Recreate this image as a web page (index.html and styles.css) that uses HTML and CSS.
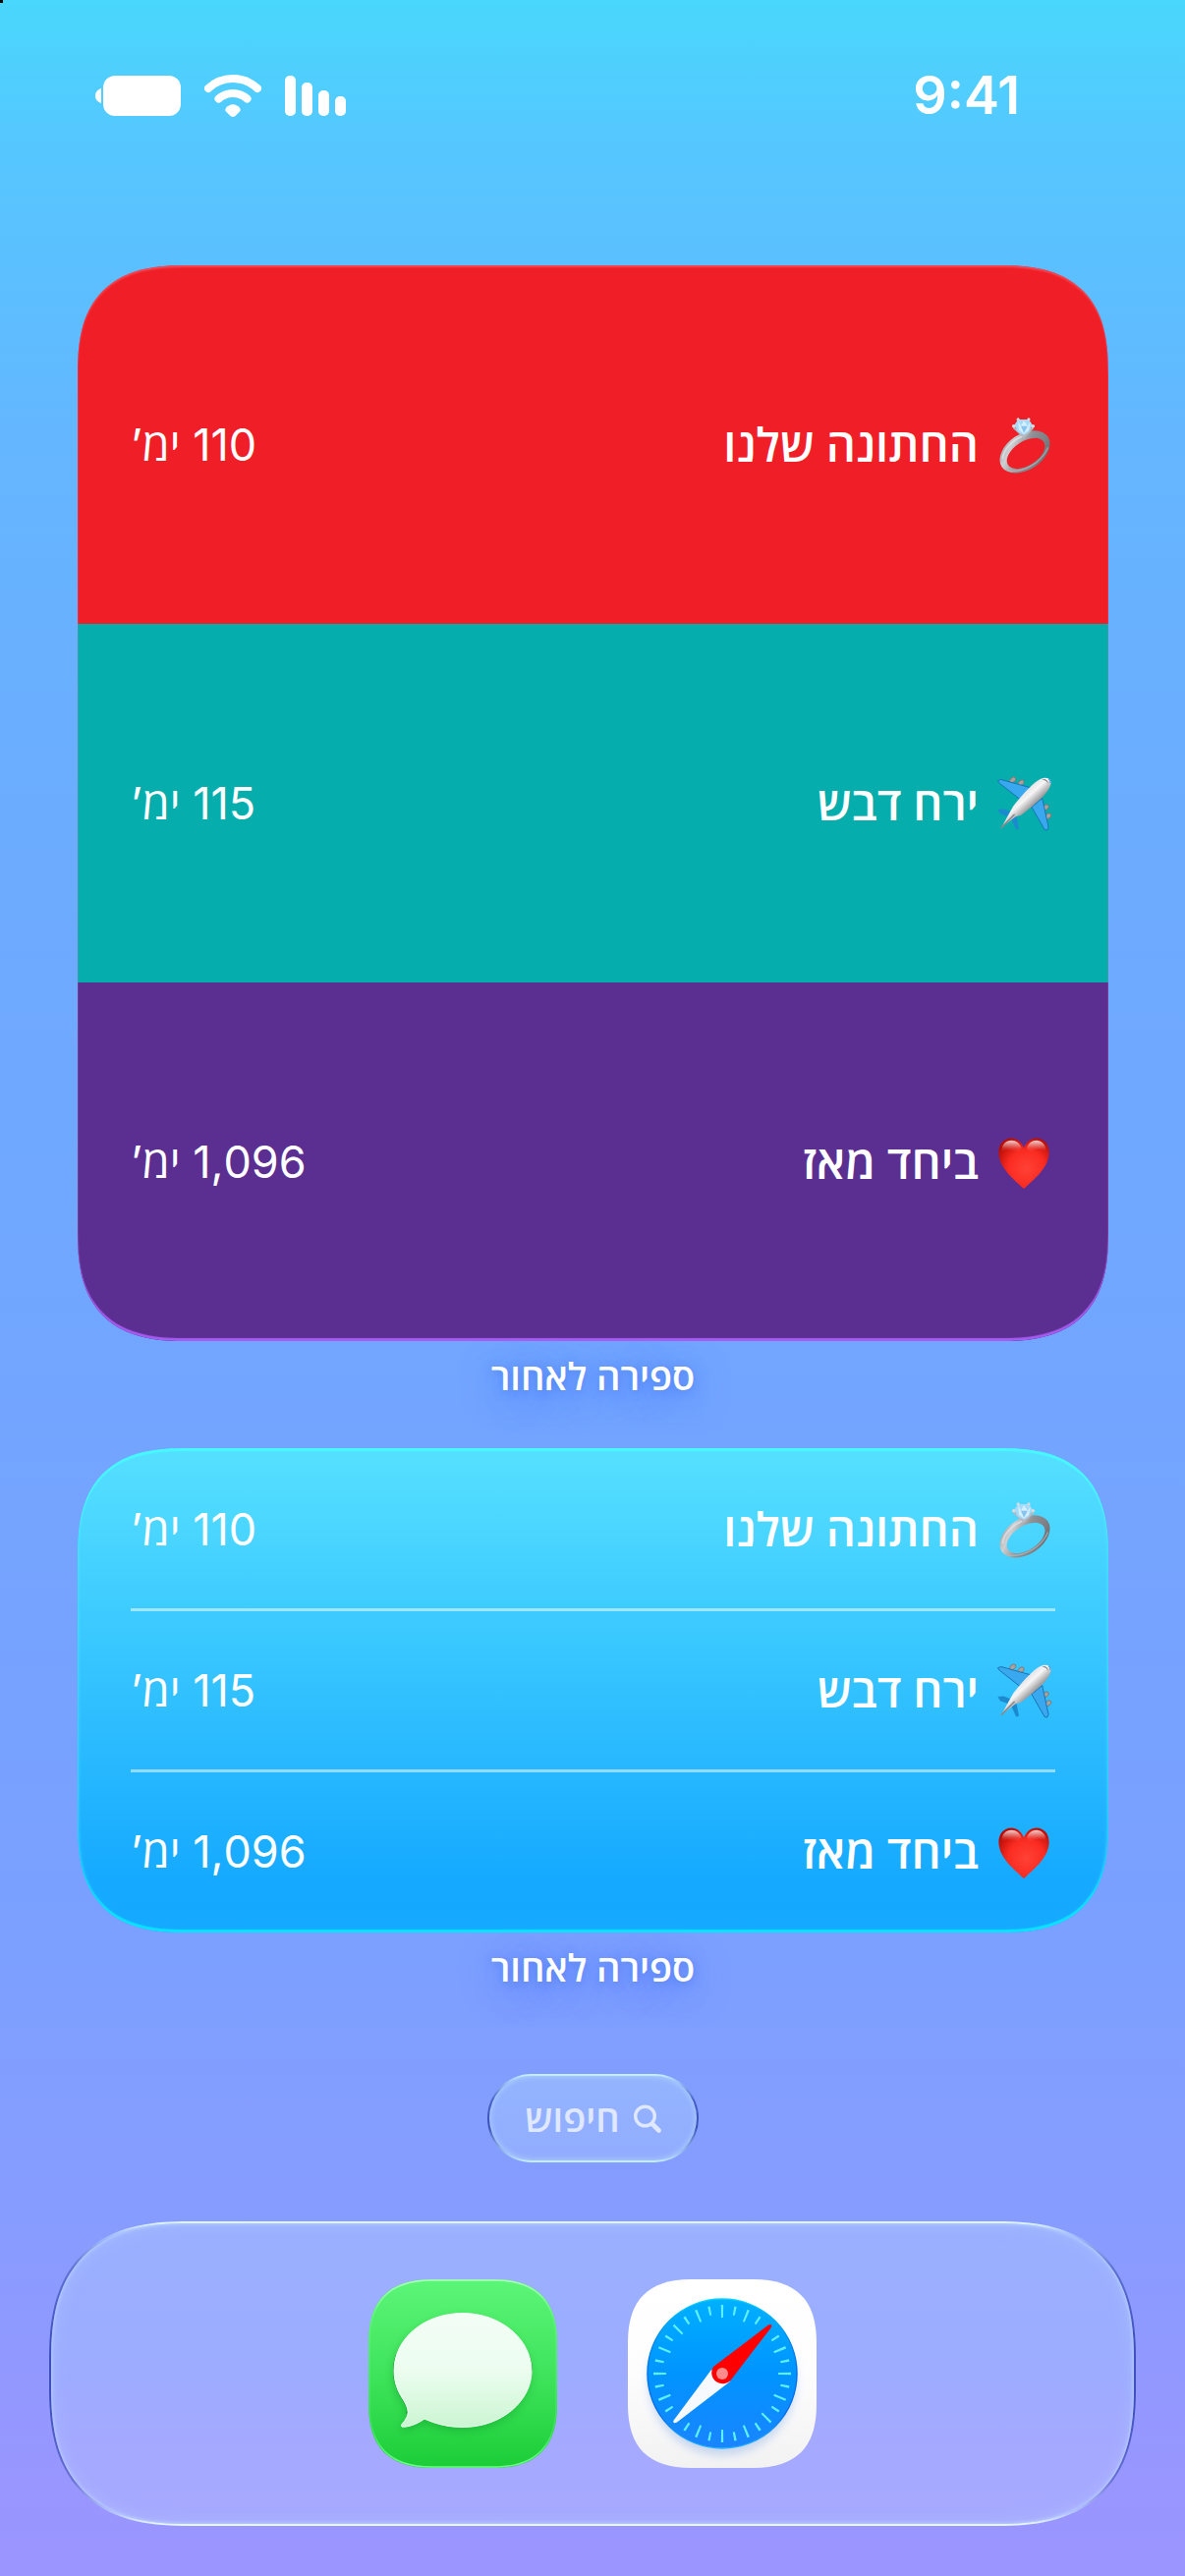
FILE: index.html
```html
<!DOCTYPE html>
<html lang="he" dir="rtl">
<head>
<meta charset="utf-8">
<meta name="viewport" content="width=device-width, initial-scale=1">
<title>ספירה לאחור</title>
<link rel="stylesheet" href="styles.css">
</head>
<body>
<svg class="defs" aria-hidden="true">
  <defs>
    <linearGradient id="metal" x1="0" y1="0" x2="1" y2="1">
      <stop offset="0" stop-color="#7f8186"/><stop offset=".25" stop-color="#cfd0d3"/><stop offset=".5" stop-color="#8e9095"/><stop offset=".75" stop-color="#7c7e83"/><stop offset="1" stop-color="#5b5e63"/>
    </linearGradient>
    <linearGradient id="body" gradientUnits="userSpaceOnUse" x1="30" y1="20" x2="42" y2="33">
      <stop offset="0" stop-color="#e4e4e6"/><stop offset=".35" stop-color="#f6f6f7"/><stop offset="1" stop-color="#8c8a8c"/>
    </linearGradient>
    <radialGradient id="heart" cx=".55" cy=".6" r=".65">
      <stop offset="0" stop-color="#ff4136"/><stop offset=".55" stop-color="#fb2c22"/><stop offset="1" stop-color="#b80c05"/>
    </radialGradient>
    <linearGradient id="shine" x1="0" y1="0" x2="0" y2="1">
      <stop offset="0" stop-color="#fff" stop-opacity=".8"/><stop offset=".7" stop-color="#fff" stop-opacity=".1"/><stop offset="1" stop-color="#fff" stop-opacity="0"/>
    </linearGradient>
    <symbol id="ring" viewBox="0 0 62 62">
      <path fill="url(#metal)" fill-rule="evenodd" transform="rotate(-33 31 38.500)" d="M2.500 38.500a28.500 18.500 0 1 0 57 0a28.500 18.500 0 1 0-57 0zM9 40.500a22 12.500 0 1 0 44 0a22 12.500 0 1 0-44 0z"/>
      <path d="M8 45C9 36 18 26 31 21.500" fill="none" stroke="#e6e7e9" stroke-width="1.800" stroke-linecap="round" opacity=".7"/>
      <path d="M14 58C30 60 48 50 55 34" fill="none" stroke="#b9babd" stroke-width="1.300" opacity=".7"/>
      <path d="M20 14l9 8M39 14l-8 8M25 18l5 5 5-5" fill="none" stroke="#b5b9bf" stroke-width="2.200" stroke-linecap="round"/>
      <path d="M20 11l4-6h11l4 6-4 7-5 3-6-3z" fill="#a6dafa"/>
      <path d="M24 6l3 6 3-6 4 6 3-5-2 9-5 4-5-4z" fill="#d4efff"/>
      <path d="M27 12l3 7 4-7z" fill="#86c3ee"/>
      <g fill="#d8d9dc"><circle cx="24" cy="5" r="1.600"/><circle cx="35" cy="5" r="1.600"/><circle cx="19.500" cy="12" r="1.800"/><circle cx="39.500" cy="12" r="1.800"/></g>
    </symbol>
    <symbol id="plane" viewBox="0 0 62 62">
      <g fill="#a9a29f" stroke="#77706d" stroke-width=".8">
        <ellipse cx="18.500" cy="7" rx="3.600" ry="2.400" transform="rotate(-40 18.500 7)"/><ellipse cx="27" cy="10" rx="3.600" ry="2.400" transform="rotate(-40 27 10)"/>
        <ellipse cx="52.500" cy="35.500" rx="3.600" ry="2.400" transform="rotate(-40 52.500 35.500)"/><ellipse cx="55" cy="44.500" rx="3.600" ry="2.400" transform="rotate(-40 55 44.500)"/>
      </g>
      <path class="tail" d="M3 37.500l6-.5 10 4-3.500 4.500L5.500 42zM22 43l3 14.500-3 1L17 47z"/>
      <path class="wing" d="M3 8l3-1.500L37 15 26 27 5 10.500zM49 26l6.500 30-1.500 3-2.500-.5L38 35z"/>
      <path fill="url(#body)" d="M7 56L19 34C26 25 38 11 46 6.500c5-2.500 10-2 11.500 1 1.500 3-.5 7-3 11C49 26 35 37.500 27 43.500l-5.500 1.500z"/>
      <path d="M49 7c2.500-1.500 6 0 6 4l-1.500-2.500C52 7 51 7 49 7z" fill="#5b5c62"/>
      <path d="M55.500 6c1.500.5 2.300 2 1.500 4" fill="none" stroke="#4aa5e8" stroke-width="1.200"/>
      <path d="M7 56l13-13" stroke="#8c8789" stroke-width="1.600" stroke-linecap="round"/>
    </symbol>
    <symbol id="love" viewBox="0 0 62 62">
      <path fill="url(#heart)" d="M30 59C21 50 4 38 4 21 4 12 10 6.500 17 6.500c6 0 10.500 4 13 10 2.500-6 7-10 13-10C50 6.500 56 12 56 21 56 38 39 50 30 59z"/>
      <path fill="url(#shine)" d="M7 20C7 13 12 9 17 9s9 3 10.500 8L24 21c-6-3-12-3-17-1zM33 17c1.500-5 5.500-8 10-8s10 4 10 11c-5-3-11-3-16 1z"/>
    </symbol>
  </defs>
</svg>

<header class="status">
  <time class="clock">9:41</time>
  <div class="indicators">
    <svg width="62" height="42" viewBox="0 0 62 42" role="img" aria-label="קליטה">
      <g fill="#fff"><rect y="1" width="11" height="41" rx="5"/><rect x="17" y="8" width="11" height="34" rx="5"/><rect x="34" y="16" width="11" height="26" rx="5"/><rect x="51" y="22" width="11" height="20" rx="5"/></g>
    </svg>
    <svg width="58" height="43" viewBox="0 0 58 43" role="img" aria-label="רשת אלחוטית">
      <path d="M4 14C18 .8 40 .8 54 14M14.500 24.500C22.500 17 35.500 17 43.500 24.500" fill="none" stroke="#fff" stroke-width="8" stroke-linecap="round"/>
      <path d="M22 34c4-5 10-5 14 0 1.500 2 .5 3-.5 4l-4 4c-1.500 1.300-3.500 1.300-5 0l-4-4c-1-1-2-2-.5-4z" fill="#fff"/>
    </svg>
    <svg width="87" height="41" viewBox="0 0 87 41" role="img" aria-label="סוללה">
      <rect x="8" width="79" height="41" rx="12" fill="#fff"/><path d="M6 13C-2 15-2 26 6 28z" fill="#fff"/>
    </svg>
  </div>
</header>

<main class="home">
  <section class="tile" aria-labelledby="name-large">
    <ul class="widget widget-blocks">
      <li class="event event-red"><svg class="emoji" role="img" aria-label="טבעת"><use href="#ring"/></svg><span class="title">החתונה שלנו</span><span class="days">110 ימ’</span></li>
      <li class="event event-teal"><svg class="emoji" role="img" aria-label="מטוס"><use href="#plane"/></svg><span class="title">ירח דבש</span><span class="days">115 ימ’</span></li>
      <li class="event event-purple"><svg class="emoji" role="img" aria-label="לב"><use href="#love"/></svg><span class="title">ביחד מאז</span><span class="days">1,096 ימ’</span></li>
    </ul>
    <h2 class="name" id="name-large">ספירה לאחור</h2>
  </section>

  <section class="tile" aria-labelledby="name-medium">
    <ul class="widget widget-list">
      <li class="event"><svg class="emoji" role="img" aria-label="טבעת"><use href="#ring"/></svg><span class="title">החתונה שלנו</span><span class="days">110 ימ’</span></li>
      <li class="event"><svg class="emoji" role="img" aria-label="מטוס"><use href="#plane"/></svg><span class="title">ירח דבש</span><span class="days">115 ימ’</span></li>
      <li class="event"><svg class="emoji" role="img" aria-label="לב"><use href="#love"/></svg><span class="title">ביחד מאז</span><span class="days">1,096 ימ’</span></li>
    </ul>
    <h2 class="name" id="name-medium">ספירה לאחור</h2>
  </section>

  <button class="search glass" type="button">
    <svg width="28" height="29" viewBox="0 0 28 29" aria-hidden="true"><circle cx="11.500" cy="12" r="9.800" fill="none" stroke="currentColor" stroke-width="3.400"/><path d="M19 20l6.500 6.500" stroke="currentColor" stroke-width="4.600" stroke-linecap="round"/></svg>
    חיפוש
  </button>
</main>

<nav class="dock glass" aria-label="יישומים">
  <a class="app" href="#safari" aria-label="ספארי">
    <svg viewBox="0 0 192 192" aria-hidden="true">
      <defs>
        <linearGradient id="paper" x1="0" y1="0" x2="0" y2="1"><stop offset="0" stop-color="#fff"/><stop offset=".5" stop-color="#fdfdfe"/><stop offset="1" stop-color="#f2f2f3"/></linearGradient>
        <linearGradient id="dial" x1="0" y1="0" x2="0" y2="1"><stop offset="0" stop-color="#00b0ff"/><stop offset=".5" stop-color="#0094ff"/><stop offset="1" stop-color="#1a84ff"/></linearGradient>
        <linearGradient id="rim" x1="0" y1="0" x2="0" y2="1"><stop offset="0" stop-color="#00d2ff"/><stop offset=".3" stop-color="#0080e8"/><stop offset=".75" stop-color="#0068e8"/><stop offset="1" stop-color="#20b4ff"/></linearGradient>
        <filter id="soft" x="-20%" y="-20%" width="140%" height="150%"><feGaussianBlur stdDeviation="5"/></filter>
      </defs>
      <path fill="url(#paper)" d="M64 0H128C171 0 192 21 192 64V128C192 171 171 192 128 192H64C21 192 0 171 0 128V64C0 21 21 0 64 0z"/>
      <circle cx="96" cy="104" r="75" fill="#6a9ae0" opacity=".35" filter="url(#soft)"/>
      <circle cx="96" cy="96" r="76" fill="url(#dial)" stroke="url(#rim)" stroke-width="1.500"/>
      <g fill="none" stroke="#5cf0ff">
        <circle cx="96" cy="96" r="63.500" stroke-width="13" pathLength="360" transform="rotate(-1 96 96)" stroke-dasharray="2 20.500 2 20.500 2 20.500 2 20.500 2 20.500 2 43 2 20.500"/>
        <circle cx="96" cy="96" r="65" stroke-width="9" pathLength="360" transform="rotate(10.250 96 96)" stroke-dasharray="2 20.500"/>
      </g>
      <path d="M85 92L47 143c-2 3 0 4 3 2.500L104 104z" fill="#f6faff"/>
      <path d="M87 89L143 46.500c3-1.500 4 0 2.500 3L106 101A11 11 0 1 1 87 89z" fill="#f00"/>
      <circle cx="96" cy="96" r="6" fill="#ff8b8b"/>
    </svg>
  </a>
  <a class="app" href="#messages" aria-label="הודעות">
    <svg viewBox="0 0 192 192" aria-hidden="true">
      <defs>
        <linearGradient id="green" x1="0" y1="0" x2="0" y2="1"><stop offset="0" stop-color="#5cf578"/><stop offset=".5" stop-color="#3fe45c"/><stop offset="1" stop-color="#1ccd37"/></linearGradient>
        <linearGradient id="edge" x1="0" y1="0" x2="0" y2="1"><stop offset="0" stop-color="#b0ffc0"/><stop offset=".2" stop-color="#5cf578"/><stop offset=".8" stop-color="#3ce058"/><stop offset="1" stop-color="#6cff88"/></linearGradient>
        <linearGradient id="bubble" x1="0" y1="0" x2="0" y2="1"><stop offset="0" stop-color="#f3fdf5"/><stop offset=".5" stop-color="#ecfdf0"/><stop offset="1" stop-color="#cbf5d2"/></linearGradient>
      </defs>
      <path fill="url(#green)" d="M64 0H128C171 0 192 21 192 64V128C192 171 171 192 128 192H64C21 192 0 171 0 128V64C0 21 21 0 64 0z"/>
      <path fill="none" stroke="url(#edge)" stroke-width="1.500" d="M64 1H128C170 1 191 22 191 64V128C191 170 170 191 128 191H64C22 191 1 170 1 128V64C1 22 22 1 64 1z"/>
      <path transform="translate(-1 4)" opacity=".3" filter="url(#soft)" fill="#067a1c" d="M96 34.500C57 34.500 26 60 26 93c0 11 3 20 9 29 5 8 7 14 3 20-2 4-6 6-4 8 4 1 15-2 23-8 11 5 24 8.500 39 8.500 39 0 70-26 70-57.500S135 34.500 96 34.500z"/>
      <path fill="#0a9c22" transform="translate(-1 0)" d="M96 38C57 38 26 62 26 93c0 11 3 20 9 29 4 7 6 10 4 15L168 93C168 62 135 38 96 38z"/>
      <path fill="url(#bubble)" stroke="#f4fff6" stroke-width="1" d="M96 34.500C57 34.500 26 60 26 93c0 11 3 20 9 29 5 8 7 14 3 20-2 4-6 6-4 8 4 1 15-2 23-8 11 5 24 8.500 39 8.500 39 0 70-26 70-57.500S135 34.500 96 34.500z"/>
    </svg>
  </a>
</nav>
</body>
</html>
```
FILE: styles.css
```css
* {
  box-sizing: border-box;
}

body {
  margin: 0;
  min-height: 100vh;
  display: flex;
  flex-direction: column;
  color: #fff;
  font-family: Inter, "Open Sans", "Noto Sans", "Liberation Sans", sans-serif;
  background: linear-gradient(#49d7fc 0%, #56c6ff 6%, #65b5ff 18%, #6cacff 32%, #72a5ff 54%, #7ba0ff 75%, #879cff 86%, #9896ff 96%, #9b95ff 100%);
}

/* Pixel in the screen corner */
body::before {
  content: "";
  position: absolute;
  top: 0;
  left: 0;
  width: 3px;
  height: 3px;
  background: #000;
}

.defs {
  position: absolute;
  width: 0;
  height: 0;
}

/* Status bar */
.status {
  display: flex;
  justify-content: space-between;
  align-items: center;
  padding: 64px 168px 140px 97px;
}

.clock {
  font-size: 54px;
  line-height: 66px;
  font-weight: 600;
}

.indicators {
  display: flex;
  align-items: center;
  gap: 24px;
}

/* Widgets */
.home {
  display: flex;
  flex-direction: column;
  padding: 0 78px 0 79px;
}

.tile {
  display: flex;
  flex-direction: column;
  margin-bottom: 37px;
}

.widget {
  position: relative;
  list-style: none;
  margin: 0;
  padding: 0;
  border-radius: 86px;
  overflow: hidden;
}

.widget::after {
  content: "";
  position: absolute;
  inset: 0;
  border-radius: inherit;
  pointer-events: none;
}

.widget-blocks::after {
  box-shadow: inset 0 2px 2px rgba(255, 120, 140, 0.5), inset 0 -3px 1px #a65cf0;
}

.widget-list {
  padding: 2px 54px;
  background: linear-gradient(#56e0ff, #15a9ff 90%, #14aaff);
}

.widget-list::after {
  box-shadow: inset 0 3px 1px #48f8ff, inset 0 -3px 1px #08e4ff, inset 0 0 4px rgba(80, 240, 255, 0.8);
}

.event {
  display: flex;
  align-items: center;
  gap: 16px;
  font-size: 45px;
  line-height: 61px;
}

.widget-blocks .event {
  padding: 152px 54px;
}

.widget-list .event {
  padding: 50px 0;
}

.widget-list .event + .event {
  border-top: 3px solid rgba(255, 255, 255, 0.5);
}

.event-red {
  background: #f01e26;
}

.event-teal {
  background: #05adac;
}

.event-purple {
  background: #5b2e91;
}

.emoji {
  width: 62px;
  height: 61px;
}

.title {
  flex: 1;
  font-size: 47px;
  font-weight: 600;
}

.days {
  font-weight: 400;
}

.tail {
  fill: #1c8ace;
}

.wing {
  fill: #3aa8ee;
  stroke: #1672b4;
  stroke-width: 1px;
}

.widget-list .tail {
  fill: #148bc6;
}

.widget-list .wing {
  fill: #30a8e0;
  stroke: #12699c;
}

.name {
  margin: 0;
  font-size: 38px;
  line-height: 72px;
  font-weight: 600;
  text-align: center;
  text-shadow: 0 2px 8px rgba(60, 110, 240, 0.5), 0 8px 36px rgba(50, 100, 255, 0.6);
}

/* Frosted surfaces with a lit top and bottom rim */
.glass {
  border: 2px solid transparent;
}

.search {
  align-self: center;
  display: flex;
  align-items: center;
  gap: 14px;
  margin: 35px 0 60px;
  padding: 18px 36px;
  border-radius: 45px;
  color: #dfe8ff;
  font: inherit;
  font-size: 38px;
  line-height: 50px;
  font-weight: 600;
  background:
    linear-gradient(#93b4ff, #92acff) padding-box,
    linear-gradient(#c8f4ff 0%, #b4dcff 4%, #4560c8 30%, #3a50b8 60%, #b4dcff 96%, #c8f4ff 100%) border-box;
  box-shadow: inset 0 0 6px rgba(190, 225, 255, 0.8);
}

.dock {
  display: flex;
  justify-content: center;
  gap: 72px;
  margin: 0 50px 51px;
  padding: 57px;
  border-radius: 112px;
  background:
    linear-gradient(#9ab0ff, #9dacff 50%, #a5a9ff 75%, #a6a9ff) padding-box,
    linear-gradient(#e4faff 0%, #a8c4ff 4%, #5f73d4 15%, #3f4fbc 40%, #3f4fbc 60%, #6870d4 85%, #b8c8ff 96%, #ecfcff 100%) border-box;
  box-shadow: inset 0 0 4px rgba(200, 225, 255, 0.9), inset 0 0 20px rgba(190, 220, 255, 0.3);
}

.app {
  display: block;
  width: 192px;
}

.app svg {
  display: block;
}

/* Continuous corner curves where the browser can draw them */
@supports (corner-shape: superellipse(1.5)) {
  .widget,
  .widget::after {
    border-radius: 112px;
    corner-shape: superellipse(1.4);
  }

  .dock {
    border-radius: 142px;
    corner-shape: superellipse(1.35);
  }
}
```
